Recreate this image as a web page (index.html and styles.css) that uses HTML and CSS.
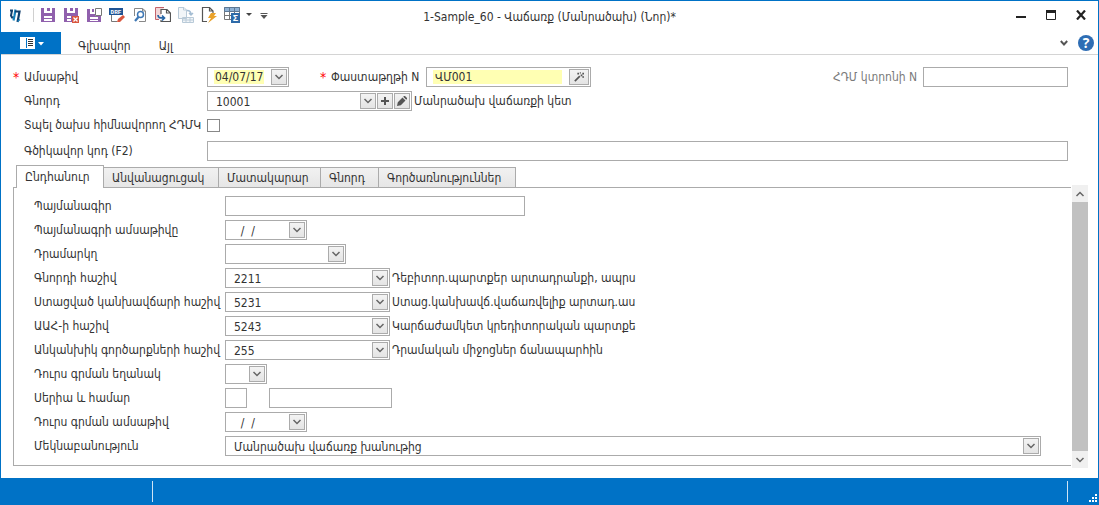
FILE: index.html
```html
<!DOCTYPE html>
<html lang="hy">
<head>
<meta charset="utf-8">
<title>1-Sample_60 - Վաճառք (Մանրածախ) (Նոր)*</title>
<link rel="stylesheet" href="styles.css">
</head>
<body>
<svg class="defs" aria-hidden="true">
  <symbol id="chev" viewBox="0 0 10 10"><path d="M1.5 3 5 6.500 8.500 3" fill="none" stroke="#666" stroke-width="1.500"/></symbol>
</svg>
<div class="window">
  <header class="titlebar">
    <div class="quick">
      <svg class="logo" viewBox="0 0 16 16" width="16" height="16" aria-hidden="true"><path d="M3 3.500h3M5 3.500 4 8.500 5 10.500H8" fill="none" stroke="#123f6c" stroke-width="2"/><path d="M8.500 2.500 7.500 8.500 6.500 13.500" fill="none" stroke="#1780bc" stroke-width="2.200"/><path d="M8 4.500h4.500L11.500 10 10.500 15" fill="none" stroke="#123f6c" stroke-width="2.200"/><path d="M10.500 14.500 13 12.500" stroke="#1780bc" stroke-width="1.500"/></svg>
      <span class="sep"></span>
      <button class="tool" aria-label="Save"><svg viewBox="0 0 16 16"><path fill="#9060ad" d="M1 1h3v5h8V1h3v14H1z"/><path fill="#9060ad" d="M7 1h3v3H7z"/><path fill="#fff" d="M4 9h8v5H4z"/><path stroke="#9060ad" d="M4 11.500h8"/></svg></button>
      <button class="tool" aria-label="Save and close"><svg viewBox="0 0 16 16"><path fill="#9060ad" d="M1 1h3v5h8V1h3v8H9v6H1z"/><path fill="#9060ad" d="M7 1h3v3H7z"/><path fill="#fff" d="M4 9h4v5H4z"/><path stroke="#9060ad" d="M4 11.500h4"/><path fill="#d9573f" d="M9 9h7v7H9z"/><path d="m10.500 10.500 4 4m0-4-4 4" stroke="#fff" stroke-width="1.200"/></svg></button>
      <button class="tool" aria-label="Save and new"><svg viewBox="0 0 16 16"><path fill="#9060ad" d="M1 2h3v5h5v2h6v6H1zM6 2h2v3H6z"/><path fill="#fff" d="M4 10h8v4H4z"/><path stroke="#9060ad" d="M4 12.500h8"/><path fill="#fff" stroke="#777" d="M9.500 1.500h6v7h-6z"/></svg></button>
      <button class="tool" aria-label="Save draft"><svg viewBox="0 0 16 16"><path fill="#fff" stroke="#777" d="M2.500 4v10.500H8"/><path fill="#1f5494" d="M0 1h14v7H0z"/><text x="7" y="7" class="drf">DRF</text><path fill="#d9573f" d="m8 15 1-3 5-4 2 2-5 5z"/></svg></button>
      <button class="tool" aria-label="Preview"><svg viewBox="0 0 16 16"><path fill="#fff" stroke="#888" d="M2.500 9V1.500h8L13.500 4v10.500H7M10.500 1.500V4h3"/><circle cx="8.500" cy="7.500" r="3" fill="#fff" stroke="#3f78b5" stroke-width="1.500"/><path d="M6.500 10 3 14" stroke="#3f78b5" stroke-width="2.200"/></svg></button>
      <button class="tool" aria-label="Copy"><svg viewBox="0 0 16 16"><path fill="#f2d6d8" stroke="#c4636b" d="M9 .5H.5v12H4"/><path fill="#fff" stroke="#555" stroke-width="1.200" d="M6 7V2.500h6l3.500 3.500v8.500H6V13M11.500 2.500V6h4"/><path d="M3 8c0 3 2 3 6 3M7 8.500 9.500 11 7 13.500" fill="none" stroke="#2664a5" stroke-width="1.700"/></svg></button>
      <button class="tool" aria-label="Fill table" disabled><svg viewBox="0 0 16 16"><path fill="#f1f5f8" stroke="#b9cad8" d="M.5.5H6L8.500 3v8.500h-8zM5.500.5V3h3M4.500 10.500h11v5h-11zM4.500 13h11M8 10.500v5M12 10.500v5"/><path d="M9 3.500c3 0 4 1 4 4M11 6l2 2 2-2" fill="none" stroke="#a4bdd3" stroke-width="1.500"/></svg></button>
      <button class="tool" aria-label="Quick action"><svg viewBox="0 0 16 16"><path fill="#fff" stroke="#555" stroke-width="1.200" d="M6 14.500H1.500V.5h7l3.500 3.500v2M8.500.5V4H12"/><path fill="#e9a22b" d="M10 6h5l-2 3h3l-9 7 3-5H7z"/></svg></button>
      <button class="tool" aria-label="Totals"><svg viewBox="0 0 16 16"><path fill="#fff" stroke="#777" d="M.5.5h15v12H.5zM.5 4.500h15M.5 8.500h15M5.500.5v12M10.500.5v12"/><path fill="#8fb2d5" stroke="#5d7894" d="M.5.5h15v4H.5zM5.500.5v4M10.500.5v4"/><path fill="#2e6aa8" d="M7 6h9v10H7z"/><text x="11.500" y="14" class="sum">Σ</text></svg></button>
      <button class="tool narrow" aria-label="Totals menu"><svg viewBox="0 0 8 16"><path fill="#444" d="M1 6h6L4 9z"/></svg></button>
      <button class="tool narrow" aria-label="Customize"><svg viewBox="0 0 8 16"><path stroke="#555" d="M.5 6.500h7"/><path fill="#555" d="M.5 8h7L4 12z"/></svg></button>
    </div>
    <h1>1-Sample_60 - Վաճառք (Մանրածախ) (Նոր)*</h1>
    <div class="winbtns">
      <button aria-label="Minimize"><svg viewBox="0 0 10 10"><path fill="#222" d="M0 6h10v2H0z"/></svg></button>
      <button aria-label="Maximize"><svg viewBox="0 0 10 10"><path d="M.5.5h9v9h-9z" fill="none" stroke="#222"/><path fill="#222" d="M0 0h10v3H0z"/></svg></button>
      <button aria-label="Close"><svg viewBox="0 0 10 10"><path d="m1 .5 8 9m0-9-8 9" stroke="#222" stroke-width="2.200"/></svg></button>
    </div>
  </header>
  <nav class="ribbon">
    <button class="file" aria-label="Menu"><svg viewBox="0 0 26 12"><path fill="#fff" d="M0 0h15v12H0z"/><path fill="#0072c6" d="M6 1h1v10H6z"/><path stroke="#333" d="M8 2.500h5M8 4.500h5M8 6.500h5M8 8.500h5"/><path fill="#fff" d="M18 5h6l-3 3.500z"/></svg></button>
    <button class="rtab first">Գլխավոր</button>
    <button class="rtab">Այլ</button>
    <span class="ribbon-end">
      <button class="collapse" aria-label="Collapse"><svg viewBox="0 0 8 8"><path d="M.8 2 4 5.500 7.200 2" fill="none" stroke="#555" stroke-width="1.900"/></svg></button>
      <button class="help" aria-label="Help">?</button>
    </span>
  </nav>
  <main class="content">
    <form class="head">
      <div class="row">
        <span class="req">*</span><label class="lbl" for="date">Ամսաթիվ</label>
        <div class="field w-date"><input id="date" class="hot" value="04/07/17"><button type="button" class="mini" aria-label="Calendar"><svg><use href="#chev"/></svg></button></div>
        <span class="req doc-req">*</span><label class="doc" for="doc">Փաստաթղթի N</label>
        <div class="field w-code"><input id="doc" class="hot docin" value="ՎՄ001"><button type="button" class="mini wide" aria-label="Generate"><svg viewBox="0 0 12 12"><path d="m1 11 6-6" stroke="#555" stroke-width="2"/><path fill="#555" d="M4 1h2v2H4zM7 0h1v2H7zM10 1h2v2h-2zM8 3h2v2H8zM10 5h2v2h-2z"/></svg></button></div>
        <label class="cash" for="cash">ՀԴՄ կտրոնի N</label>
        <input id="cash" class="box w-cash">
      </div>
      <div class="row">
        <label class="lbl wide-lbl" for="buyer">Գնորդ</label>
        <div class="field w-buyer"><select id="buyer"><option>10001</option></select><span class="mini"><svg><use href="#chev"/></svg></span><button type="button" class="mini" aria-label="Add"><svg viewBox="0 0 10 10"><path d="M5 1v8M1 5h8" stroke="#555" stroke-width="2"/></svg></button><button type="button" class="mini" aria-label="Edit"><svg viewBox="0 0 10 10"><path fill="#555" d="m0 10 .8-3.800L5.500 1.500l3 3L3.800 9.200zM6.200.8 7 0h1l2 2v1l-.8.8z"/></svg></button></div>
        <span class="note">Մանրածախ վաճառքի կետ</span>
      </div>
      <div class="row">
        <label class="lbl wide-lbl" for="print">Տպել ծախս հիմնավորող ՀԴՄԿ</label>
        <input type="checkbox" id="print">
      </div>
      <div class="row last">
        <label class="lbl wide-lbl" for="bar">Գծիկավոր կոդ (F2)</label>
        <input id="bar" class="box grow">
      </div>
    </form>
    <div class="lower">
      <div class="tabbed">
        <div class="tabs" role="tablist">
          <button role="tab" aria-selected="true" class="tab t1 on">Ընդհանուր</button>
          <button role="tab" class="tab t2">Անվանացուցակ</button>
          <button role="tab" class="tab t3">Մատակարար</button>
          <button role="tab" class="tab t4">Գնորդ</button>
          <button role="tab" class="tab t5">Գործառնություններ</button>
        </div>
        <form class="panel" role="tabpanel">
          <div class="row"><label class="plbl" for="p1">Պայմանագիր</label><input id="p1" class="box w-contract"></div>
          <div class="row"><label class="plbl" for="p2">Պայմանագրի ամսաթիվը</label><div class="field w-date"><input id="p2" value="  /  /"><button type="button" class="mini" aria-label="Calendar"><svg><use href="#chev"/></svg></button></div></div>
          <div class="row"><label class="plbl" for="p3">Դրամարկղ</label><div class="field w-desk"><select id="p3"><option></option></select><span class="mini"><svg><use href="#chev"/></svg></span></div></div>
          <div class="row"><label class="plbl" for="p4">Գնորդի հաշիվ</label><div class="field w-code"><select id="p4"><option>2211</option></select><span class="mini"><svg><use href="#chev"/></svg></span></div><span class="note">Դեբիտոր.պարտքեր արտադրանքի, ապրս</span></div>
          <div class="row"><label class="plbl" for="p5">Ստացված կանխավճարի հաշիվ</label><div class="field w-code"><select id="p5"><option>5231</option></select><span class="mini"><svg><use href="#chev"/></svg></span></div><span class="note">Ստաց.կանխավճ.վաճառվելիք արտադ.աս</span></div>
          <div class="row"><label class="plbl" for="p6">ԱԱՀ-ի հաշիվ</label><div class="field w-code"><select id="p6"><option>5243</option></select><span class="mini"><svg><use href="#chev"/></svg></span></div><span class="note">Կարճաժամկետ կրեդիտորական պարտքե</span></div>
          <div class="row"><label class="plbl" for="p7">Անկանխիկ գործարքների հաշիվ</label><div class="field w-code"><select id="p7"><option>255</option></select><span class="mini"><svg><use href="#chev"/></svg></span></div><span class="note">Դրամական միջոցներ ճանապարհին</span></div>
          <div class="row"><label class="plbl" for="p8">Դուրս գրման եղանակ</label><div class="field w-mode"><select id="p8"><option></option></select><span class="mini"><svg><use href="#chev"/></svg></span></div></div>
          <div class="row"><label class="plbl" for="p9">Սերիա և համար</label><input id="p9" class="box w-series"><input class="box w-number" aria-label="Համար"></div>
          <div class="row"><label class="plbl" for="p10">Դուրս գրման ամսաթիվ</label><div class="field w-date"><input id="p10" value="  /  /"><button type="button" class="mini" aria-label="Calendar"><svg><use href="#chev"/></svg></button></div></div>
          <div class="row"><label class="plbl" for="p11">Մեկնաբանություն</label><div class="field grow"><select id="p11"><option>Մանրածախ վաճառք խանութից</option></select><span class="mini"><svg><use href="#chev"/></svg></span></div></div>
        </form>
      </div>
      <div class="scroll" aria-hidden="true">
        <span class="arrow up"><svg><use href="#chev"/></svg></span>
        <span class="thumb"></span>
        <span class="arrow"><svg><use href="#chev"/></svg></span>
      </div>
    </div>
  </main>
  <footer class="status">
    <span class="cell"></span><span class="cell mid"></span>
    <svg class="grip" viewBox="0 0 8 8" aria-hidden="true"><path fill="#fff" d="M6 0h2v2H6zM3 3h2v2H3zM6 3h2v2H6zM0 6h2v2H0zM3 6h2v2H3zM6 6h2v2H6z"/></svg>
  </footer>
</div>
</body>
</html>
```
FILE: styles.css
```css
* { box-sizing: border-box; }
body { margin: 0; }
body, button, input, select {
  font: 12px/16px "DejaVu Sans Condensed", "DejaVu Sans", sans-serif;
  color: #333;
}
button { padding: 0; border: 0; background: none; }
.defs { position: absolute; width: 0; height: 0; }
svg { display: block; }
.window {
  min-height: 100vh;
  display: flex;
  flex-direction: column;
  background: #fff;
  border: 1px solid #0072c6;
  border-bottom: 0;
}
.titlebar {
  display: grid;
  grid-template-columns: 1fr auto 1fr;
  align-items: center;
  height: 31px;
}
.quick { display: flex; align-items: center; gap: 7px; padding: 0 0 3px 6px; }
.sep { width: 1px; height: 14px; background: #d0d0d0; margin: 0 -1px 0 3px; }
.tool { width: 16px; height: 16px; }
.tool svg { width: 100%; height: 100%; }
.drf, .sum { font: bold 6px "Liberation Mono", monospace; fill: #fff; text-anchor: middle; }
.sum { font-size: 9px; }
.narrow { width: 8px; margin-left: -2px; }
.narrow + .narrow { margin-left: 0; }
h1 { margin: 0; font-size: 12px; font-weight: normal; line-height: 16px; }
.winbtns { display: flex; justify-content: flex-end; gap: 20px; padding: 0 12px 4px 0; }
.winbtns svg { width: 10px; height: 10px; }
.ribbon {
  display: flex;
  align-items: stretch;
  height: 23px;
  border-bottom: 1px solid #d4d4d4;
}
.file { display: flex; align-items: center; width: 60px; padding-left: 19px; background: #0072c6; }
.file svg { width: 26px; height: 12px; }
.rtab { padding-top: 5px; margin-left: 28px; }
.rtab.first { margin-left: 17px; }
.ribbon-end { margin-left: auto; display: flex; align-items: center; gap: 10px; padding: 0 4px 1px 0; }
.collapse svg { width: 8px; height: 8px; }
.help {
  width: 16px;
  height: 16px;
  border-radius: 50%;
  background: #2e6db4;
  color: #fff;
  font: bold 14px/16px "Open Sans", sans-serif;
}
.content { flex: 1; display: flex; flex-direction: column; padding: 12px 10px 10px 12px; }
.head { padding-right: 20px; display: flex; flex-direction: column; gap: 4px; }
.row { display: flex; align-items: center; height: 20px; }
.row.last { margin-top: 2px; }
.req { color: red; width: 11px; font-size: 14px; }
.lbl { width: 183px; white-space: nowrap; }
.wide-lbl { width: 194px; padding-left: 11px; }
.doc-req { margin-left: 31px; }
.doc { width: 95px; }
.cash { margin-left: auto; width: 90px; color: #7a7a7a; white-space: nowrap; }
.box { height: 20px; border: 1px solid #ababab; background: #fff; padding: 0 8px; border-radius: 0; }
.field { display: flex; gap: 1px; height: 20px; padding: 1px; border: 1px solid #ababab; background: #fff; }
.field input, .field select {
  flex: 1;
  min-width: 0;
  border: 0;
  padding: 1px 0 0 7px;
  background: none;
  appearance: none;
  outline: 0;
}
.field .hot { background: #ffffb3; padding: 0 0 0 1px; margin: 1px 6px 1px 5px; }
.field .docin { padding-left: 2px; }
.mini {
  display: flex;
  align-items: center;
  justify-content: center;
  flex: none;
  width: 16px;
  height: 16px;
  border: 1px solid #ababab;
  background: linear-gradient(#f3f3f3, #e4e4e4);
}
.mini svg, .arrow svg { width: 10px; height: 10px; }
.mini.wide { width: 20px; }
.w-date { width: 82px; }
.w-code { width: 165px; }
.w-buyer { width: 205px; }
.w-cash { width: 145px; }
.w-contract { width: 300px; }
.w-desk { width: 121px; }
.w-mode { width: 42px; }
.w-series { width: 22px; }
.w-number { width: 123px; margin-left: 22px; }
.grow { flex: 1; min-width: 0; }
.note { margin-left: 2px; white-space: nowrap; }
input[type="checkbox"] { appearance: none; width: 13px; height: 13px; margin: 0; border: 1px solid #888; background: #fff; }
.lower { flex: 1; display: flex; gap: 1px; margin-top: 4px; }
.tabbed { flex: 1; min-width: 0; display: flex; flex-direction: column; margin-bottom: 2px; }
.tabs { position: relative; display: flex; align-items: flex-end; padding-left: 3px; height: 23px; margin-bottom: -1px; }
.tab {
  height: 21px;
  padding: 0 0 0 8px;
  text-align: left;
  white-space: nowrap;
  border: 1px solid #ababab;
  border-left: 0;
  background: linear-gradient(#f1f1f1, #e6e6e6);
}
.tab.on { height: 23px; border-left: 1px solid #ababab; border-bottom: 0; background: #fff; }
.t1 { width: 88px; }
.t2 { width: 115px; }
.t3 { width: 102px; }
.t4 { width: 58px; }
.t5 { width: 137px; }
.panel {
  flex: 1;
  display: flex;
  flex-direction: column;
  gap: 4px;
  padding: 8px 30px 9px 20px;
  border: 1px solid #ababab;
  border-right: 0;
}
.plbl { width: 191px; white-space: nowrap; }
.scroll { width: 16px; margin-top: 20px; display: flex; flex-direction: column; background: #f0f0f0; }
.arrow { height: 17px; display: flex; align-items: center; justify-content: center; }
.up svg { transform: rotate(180deg); }
.thumb { flex: 1; background: #c1c1c1; }
.status { display: flex; align-items: stretch; height: 27px; padding: 3px 1px 3px 0; background: #0072c6; }
.cell { width: 152px; border-right: 1px solid #cfe4f5; }
.mid { flex: 1; }
.grip { width: 8px; height: 8px; margin-left: 21px; align-self: flex-end; }
```
